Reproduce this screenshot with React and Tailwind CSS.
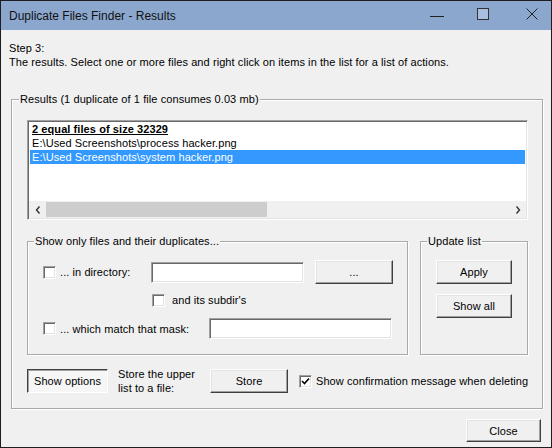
import React from "react";
import { clsx } from "clsx";

const raised =
  "border border-t-white border-l-white border-b-[#404040] border-r-[#404040] shadow-[inset_-1px_-1px_0_#a0a0a0,inset_1px_1px_0_#e3e3e3]";
const sunken =
  "border border-t-[#a0a0a0] border-l-[#a0a0a0] border-b-white border-r-white shadow-[inset_1px_1px_0_#696969,inset_-1px_-1px_0_#e3e3e3]";

function Btn({ className, children }) {
  return (
    <button className={clsx("flex items-center justify-center bg-[#f0f0f0] text-black", raised, className)}>
      {children}
    </button>
  );
}

function Check({ checked }) {
  return (
    <span className={clsx("w-[13px] h-[13px] shrink-0 bg-white flex items-center justify-center", sunken)}>
      {checked && (
        <svg width="9" height="9" viewBox="0 0 9 9">
          <path d="M1 4 L3.5 6.5 L8 1.5" fill="none" stroke="#000" strokeWidth="1.6" />
        </svg>
      )}
    </span>
  );
}

function Group({ title, className, legendClass = "ml-[6px]", children }) {
  return (
    <fieldset className={clsx("border border-[#a9a9a9] shadow-[inset_1px_1px_0_#fff,1px_1px_0_#fff]", className)}>
      <legend className={clsx("px-[1px] bg-[#f0f0f0] leading-[14px]", legendClass)}>{title}</legend>
      {children}
    </fieldset>
  );
}

export default function App() {
  return (
    <div className="w-[552px] h-[448px] flex flex-col bg-[#f0f0f0] border border-[#1e1e1e] text-[11px] leading-[14px] tracking-[0.08px] text-black font-['Liberation_Sans',Arial,sans-serif]">
      {/* title bar */}
      <div className="h-[29px] shrink-0 flex items-center bg-[#8ca7cd]">
        <span className="pl-[8px] text-[12px] tracking-normal text-[#111]">Duplicate Files Finder - Results</span>
        <div className="ml-auto flex h-full">
          <div className="w-[46px] flex items-center justify-center">
            <div className="w-[14px] h-[1px] bg-[#222] mt-[1px]" />
          </div>
          <div className="w-[46px] flex items-center justify-center">
            <div className="w-[12px] h-[12px] border border-[#333] bg-[#a9bfdf] mb-[4px]" />
          </div>
          <div className="w-[45px] flex items-center justify-end pr-[13px]">
            <svg width="12" height="12" viewBox="0 0 12 12" className="mb-[4px]">
              <path d="M0.5 0.5 L11.5 11.5 M11.5 0.5 L0.5 11.5" stroke="#222" strokeWidth="1" />
            </svg>
          </div>
        </div>
      </div>

      {/* body */}
      <div className="flex-1 flex flex-col px-[8px] pt-[11px]">
        <div>Step 3:</div>
        <div>The results. Select one or more files and right click on items in the list for a list of actions.</div>

        <Group title="Results (1 duplicate of 1 file consumes 0.03 mb)" legendClass="ml-[7px]" className="mt-[23px] ml-[2px] h-[317px]">
          <div className="pl-[15px] pr-[14px]">
            {/* listbox */}
            <div className={clsx("mt-[14px] h-[100px] bg-white flex flex-col", sunken)}>
              <div className="flex-1 pt-[1px] px-[2px]">
                <div className="px-[2px] h-[14px] font-bold underline">2 equal files of size 32329</div>
                <div className="px-[2px] h-[14px]">E:\Used Screenshots\process hacker.png</div>
                <div className="px-[2px] h-[14px] bg-[#3399ff] text-white">E:\Used Screenshots\system hacker.png</div>
              </div>
              <div className="h-[17px] flex items-center bg-[#f0f0f0] mx-[1px] mb-[1px]">
                <div className="w-[17px] flex justify-center">
                  <svg width="6" height="8" viewBox="0 0 6 8">
                    <path d="M4.5 0.5 L1.5 4 L4.5 7.5" fill="none" stroke="#333" strokeWidth="1.4" />
                  </svg>
                </div>
                <div className="w-[221px] h-[15px] bg-[#cdcdcd]" />
                <div className="flex-1" />
                <div className="w-[17px] flex justify-center">
                  <svg width="6" height="8" viewBox="0 0 6 8">
                    <path d="M1.5 0.5 L4.5 4 L1.5 7.5" fill="none" stroke="#333" strokeWidth="1.4" />
                  </svg>
                </div>
              </div>
            </div>

            {/* filters */}
            <div className="mt-[14px] flex gap-[12px]">
              <Group title="Show only files and their duplicates..." className="w-[381px] h-[121px]">
                <div className="pl-[15px]">
                  <div className="mt-[12px] h-[24px] flex items-center">
                    <Check />
                    <span className="ml-[4px] w-[91px]">... in directory:</span>
                    <div className={clsx("w-[153px] h-[21px] bg-white", sunken)} />
                    <Btn className="ml-[11px] w-[78px] h-[24px]">...</Btn>
                  </div>
                  <div className="mt-[9px] h-[14px] flex items-center pl-[109px]">
                    <Check />
                    <span className="ml-[7px]">and its subdir's</span>
                  </div>
                  <div className="mt-[11px] h-[21px] flex items-center">
                    <Check />
                    <span className="ml-[4px] w-[149px]">... which match that mask:</span>
                    <div className={clsx("w-[183px] h-[21px] bg-white", sunken)} />
                  </div>
                </div>
              </Group>
              <Group title="Update list" className="w-[108px] h-[121px]">
                <div className="pl-[15px] flex flex-col gap-[10px] mt-[12px]">
                  <Btn className="w-[76px] h-[24px]">Apply</Btn>
                  <Btn className="w-[76px] h-[24px]">Show all</Btn>
                </div>
              </Group>
            </div>

            {/* bottom row */}
            <div className="mt-[12px] flex items-center">
              <button className="w-[81px] h-[24px] flex items-center justify-center bg-[#f6f6f6] border border-t-[#404040] border-l-[#404040] border-b-white border-r-white shadow-[inset_1px_1px_0_#a0a0a0]">
                Show options
              </button>
              <div className="ml-[10px] w-[92px]">
                <div>Store the upper</div>
                <div>list to a file:</div>
              </div>
              <Btn className="w-[78px] h-[24px]">Store</Btn>
              <div className="ml-[11px] flex items-center">
                <Check checked />
                <span className="ml-[4px] whitespace-nowrap">Show confirmation message when deleting</span>
              </div>
            </div>
          </div>
        </Group>

        <div className="mt-[10px] flex justify-end mr-[2px]">
          <Btn className="w-[75px] h-[23px]">Close</Btn>
        </div>
      </div>
    </div>
  );
}
